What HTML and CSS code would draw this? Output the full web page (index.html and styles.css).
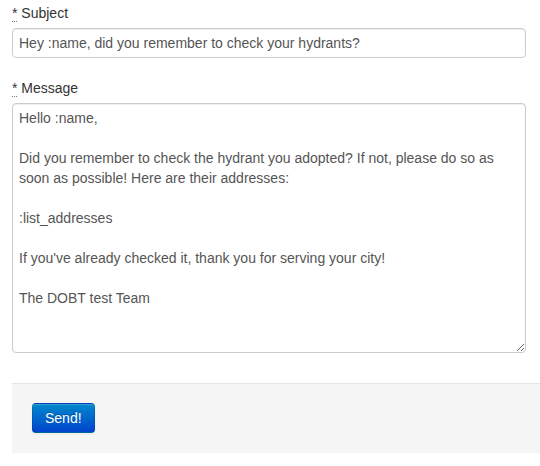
FILE: index.html
```html
<!DOCTYPE html>
<html>
<head>
<meta charset="utf-8">
<link rel="stylesheet" href="styles.css">
</head>
<body>
<form class="form">
  <div class="group">
    <label class="label" for="subject"><abbr class="req" title="required">*</abbr> Subject</label>
    <input class="input" id="subject" type="text" value="Hey :name, did you remember to check your hydrants?">
  </div>
  <div class="group">
    <label class="label" for="message"><abbr class="req" title="required">*</abbr> Message</label>
    <textarea class="textarea" id="message">Hello :name,

Did you remember to check the hydrant you adopted? If not, please do so as soon as possible! Here are their addresses:

:list_addresses

If you've already checked it, thank you for serving your city!

The DOBT test Team</textarea>
  </div>
  <div class="actions">
    <button class="btn" type="button">Send!</button>
  </div>
</form>
</body>
</html>
```

FILE: styles.css
```css
html, body {
  margin: 0;
  padding: 0;
  background: #fff;
}
body {
  font-family: "Liberation Sans", Arial, sans-serif;
  font-size: 14px;
  line-height: 20px;
  color: #333;
}
.form {
  padding: 3px 0 0 12px;
}
.group {
  display: flex;
  flex-direction: column;
  align-items: flex-start;
  margin-bottom: 20px;
}
.label {
  display: block;
  margin-bottom: 5px;
  color: #333;
}
.req {
  text-decoration: none;
  border-bottom: 1px dotted #777;
  cursor: help;
}
.input, .textarea {
  box-sizing: border-box;
  width: 514px;
  font-family: "Liberation Sans", Arial, sans-serif;
  font-size: 14px;
  line-height: 20px;
  color: #555;
  background: #fff;
  border: 1px solid #ccc;
  border-radius: 4px;
  box-shadow: inset 0 1px 1px rgba(0,0,0,0.075);
  padding: 4px 6px;
  margin: 0;
  outline: none;
}
.input {
  height: 30px;
}
.textarea {
  height: 250px;
  resize: vertical;
  resize: both;
  overflow: hidden;
}
.group:last-of-type {
  margin-bottom: 0;
}
.actions {
  margin-top: 30px;
  padding: 19px 20px 20px;
  background: #f5f5f5;
  border-top: 1px solid #e5e5e5;
}
.btn {
  display: inline-block;
  height: 30px;
  padding: 4px 12px;
  font-family: "Liberation Sans", Arial, sans-serif;
  font-size: 14px;
  line-height: 20px;
  color: #fff;
  text-shadow: 0 -1px 0 rgba(0,0,0,0.25);
  background-color: #006dcc;
  background-image: linear-gradient(to bottom, #0088cc, #0044cc);
  border: 1px solid #0044cc;
  border-color: rgba(0,0,0,0.1) rgba(0,0,0,0.1) rgba(0,0,0,0.25);
  border-radius: 4px;
  box-shadow: inset 0 1px 0 rgba(255,255,255,0.2), 0 1px 2px rgba(0,0,0,0.05);
  cursor: pointer;
}
```
